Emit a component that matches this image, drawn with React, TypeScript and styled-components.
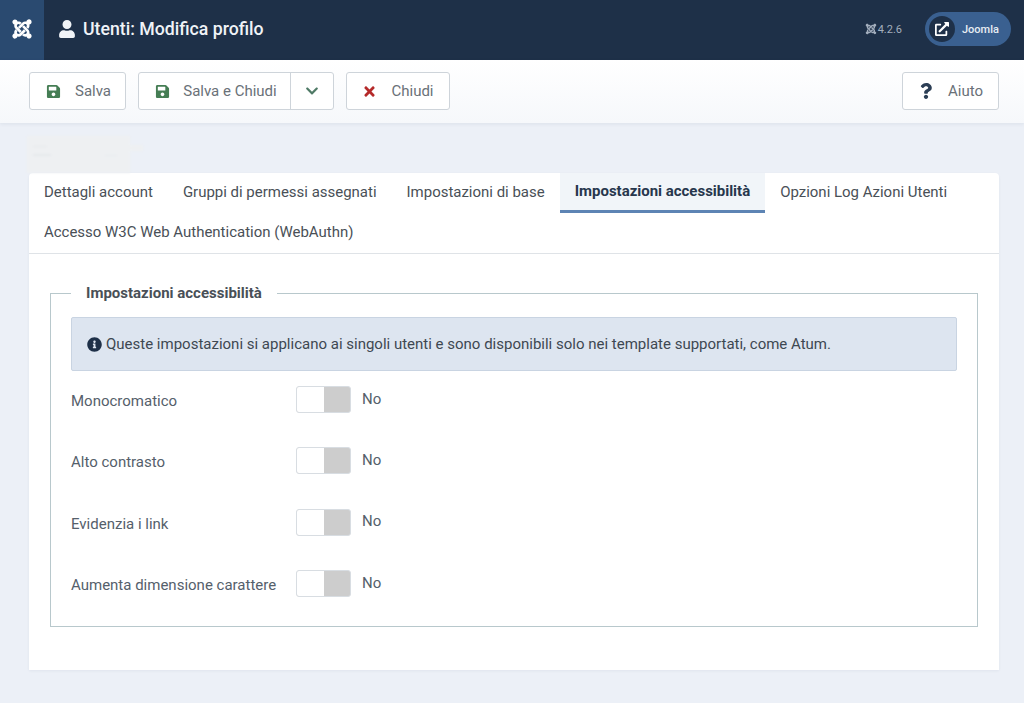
import React from "react";
import styled, { createGlobalStyle } from "styled-components";
import {
  FaChevronDown,
  FaExternalLinkAlt,
  FaInfoCircle,
  FaJoomla,
  FaQuestion,
  FaSave,
  FaTimes,
  FaUser,
} from "react-icons/fa";

const GlobalStyle = createGlobalStyle`
  html, body {
    margin: 0;
    padding: 0;
    height: 100%;
    background: #ecf0f7;
    font-family: Roboto, "Liberation Sans", sans-serif;
    color: #495057;
    -webkit-font-smoothing: antialiased;
  }
  * { box-sizing: border-box; }
`;

const Page = styled.div`
  width: 1024px;
  height: 703px;
  overflow: hidden;
  display: flex;
  flex-direction: column;
`;

const Header = styled.header`
  height: 60px;
  flex: none;
  display: flex;
  align-items: center;
  background: #1e3048;
  color: #fff;
`;

const LogoBox = styled.div`
  width: 44px;
  height: 60px;
  display: flex;
  align-items: center;
  justify-content: center;
  background: #2a4a70;
  font-size: 22px;
  svg { margin: -2px 1px 0 0; }
`;

const PageTitle = styled.h1`
  margin: 0 0 3px 14px;
  display: flex;
  align-items: center;
  gap: 7px;
  font-size: 17.7px;
  font-weight: 500;
  color: #f0f3f7;
  svg { font-size: 18px; }
`;

const HeaderRight = styled.div`
  margin: 0 13px 2px auto;
  display: flex;
  align-items: center;
  gap: 23px;
`;

const Version = styled.span`
  display: flex;
  align-items: center;
  gap: 1px;
  font-size: 11px;
  color: #a3aebd;
  svg { font-size: 12px; }
`;

const SitePill = styled.div`
  width: 86px;
  height: 34px;
  border-radius: 17px;
  display: flex;
  align-items: center;
  background: #3a6090;
  font-size: 11px;
  font-weight: 500;
  color: #e8edf3;
`;

const PillIcon = styled.span`
  width: 26px;
  height: 26px;
  margin: 0 7px 0 4px;
  border-radius: 50%;
  display: flex;
  align-items: center;
  justify-content: center;
  background: #1e3048;
  color: #fff;
  font-size: 14px;
`;

const Toolbar = styled.div`
  height: 63px;
  flex: none;
  padding: 12px 25px 0 29px;
  display: flex;
  align-items: flex-start;
  gap: 12px;
  background: linear-gradient(#fff, #f6f8fb);
  box-shadow: 0 1px 4px rgba(30, 50, 80, 0.08);
`;

const ToolButton = styled.button<{ $width: number; $push?: boolean; $nudge?: number }>`
  width: ${(p) => p.$width}px;
  height: 38px;
  padding: 0 0 0 ${(p) => p.$nudge ?? 0}px;
  display: flex;
  align-items: center;
  justify-content: center;
  gap: 14px;
  margin-left: ${(p) => (p.$push ? "auto" : "0")};
  background: #fff;
  border: 1px solid #ced4da;
  border-radius: 3px;
  font-family: inherit;
  font-size: 15px;
  color: #6a7178;
`;

const SplitGroup = styled.div`
  width: 196px;
  height: 38px;
  display: flex;
  background: #fff;
  border: 1px solid #ced4da;
  border-radius: 3px;
`;

const SplitMain = styled.div`
  flex: 1;
  padding-left: 3px;
  display: flex;
  align-items: center;
  justify-content: center;
  gap: 13px;
  font-size: 15px;
  color: #6a7178;
`;

const SplitCaret = styled.div`
  width: 43px;
  display: flex;
  align-items: center;
  justify-content: center;
  border-left: 1px solid #ced4da;
  color: #4f7a66;
  font-size: 14px;
`;

const SaveIcon = styled(FaSave)`
  color: #457d54;
  font-size: 15px;
`;

const CloseIcon = styled(FaTimes)`
  color: #b52a2a;
  font-size: 15px;
`;

const HelpIcon = styled(FaQuestion)`
  color: #2c3e55;
  font-size: 16px;
`;

const Main = styled.main`
  flex: 1;
  padding: 13px 25px 0 29px;
`;

const Smudge = styled.div`
  position: relative;
  width: 103px;
  height: 37px;
  margin-left: -2px;
  background:
    linear-gradient(#e6e9ec, #e6e9ec) 6px 10px / 14px 1px no-repeat,
    linear-gradient(#e6e9ec, #e6e9ec) 6px 18px / 18px 2px no-repeat,
    linear-gradient(#e8ebee, #e8ebee) 78px 19px / 12px 1px no-repeat,
    #eef0f2;
  filter: blur(1px);
  &::after {
    content: "";
    position: absolute;
    left: 100%;
    top: 9px;
    width: 13px;
    height: 6px;
    background: #eef0f2;
  }
`;

const Card = styled.section`
  height: 497px;
  background: #fff;
  border-radius: 4px 4px 0 0;
  box-shadow: 0 1px 3px rgba(30, 50, 80, 0.06);
`;

const Tabs = styled.nav`
  height: 81px;
  display: flex;
  flex-wrap: wrap;
  align-content: flex-start;
  border-bottom: 1px solid #dfe3e7;
`;

const Tab = styled.div<{ $active?: boolean }>`
  height: 40px;
  padding: 0 15px 2px;
  display: flex;
  align-items: center;
  font-size: 14.98px;
  font-weight: ${(p) => (p.$active ? 700 : 400)};
  color: ${(p) => (p.$active ? "#27374d" : "#495057")};
  background: ${(p) => (p.$active ? "#f1f5f9" : "transparent")};
  border-bottom: ${(p) => (p.$active ? "3px solid #5d84b4" : "0")};
`;

const Body = styled.div`
  padding: 30px 21px 0;
`;

const Fieldset = styled.fieldset`
  width: 928px;
  height: 343px;
  margin: 0;
  padding: 15px 20px 0;
  border: 1px solid #b8c8cc;
`;

const Legend = styled.legend`
  margin-left: 0;
  padding: 0 15px;
  width: auto;
  font-size: 15px;
  font-weight: 700;
  color: #495057;
`;

const Alert = styled.div`
  height: 54px;
  padding: 0 15px;
  display: flex;
  align-items: center;
  gap: 4px;
  background: #dde5f0;
  border: 1px solid #c9d4e2;
  border-radius: 2px;
  font-size: 15px;
  color: #3d4852;
  svg {
    font-size: 15px;
    color: #1e3048;
  }
`;

const Options = styled.div`
  margin-top: 15px;
  display: flex;
  flex-direction: column;
  gap: 34.4px;
`;

const Row = styled.div`
  height: 27px;
  display: flex;
  align-items: center;
`;

const RowLabel = styled.label`
  width: 225px;
  padding-top: 3px;
  font-size: 15px;
  color: #55606b;
`;

const Switch = styled.div`
  width: 55px;
  height: 27px;
  display: flex;
  background: #cdcdcd;
  border: 1px solid #d8dde2;
  border-radius: 3px;
  overflow: hidden;
`;

const Knob = styled.span`
  width: 27px;
  background: #fff;
`;

const SwitchText = styled.span`
  margin-left: 11px;
  margin-top: -2px;
  font-size: 15px;
  color: #55606b;
`;

const tabs = [
  "Dettagli account",
  "Gruppi di permessi assegnati",
  "Impostazioni di base",
  "Impostazioni accessibilità",
  "Opzioni Log Azioni Utenti",
  "Accesso W3C Web Authentication (WebAuthn)",
];

const options = [
  "Monocromatico",
  "Alto contrasto",
  "Evidenzia i link",
  "Aumenta dimensione carattere",
];

const App = () => {
  return (
    <Page>
      <GlobalStyle />
      <Header>
        <LogoBox>
          <FaJoomla />
        </LogoBox>
        <PageTitle>
          <FaUser />
          Utenti: Modifica profilo
        </PageTitle>
        <HeaderRight>
          <Version>
            <FaJoomla />
            4.2.6
          </Version>
          <SitePill>
            <PillIcon>
              <FaExternalLinkAlt />
            </PillIcon>
            Joomla
          </SitePill>
        </HeaderRight>
      </Header>
      <Toolbar>
        <ToolButton $width={97} $nudge={2}>
          <SaveIcon />
          Salva
        </ToolButton>
        <SplitGroup>
          <SplitMain>
            <SaveIcon />
            Salva e Chiudi
          </SplitMain>
          <SplitCaret>
            <FaChevronDown />
          </SplitCaret>
        </SplitGroup>
        <ToolButton $width={104}>
          <CloseIcon />
          Chiudi
        </ToolButton>
        <ToolButton $width={97} $push>
          <HelpIcon />
          Aiuto
        </ToolButton>
      </Toolbar>
      <Main>
        <Smudge />
        <Card>
          <Tabs>
            {tabs.map((t) => (
              <Tab key={t} $active={t === "Impostazioni accessibilità"}>
                {t}
              </Tab>
            ))}
          </Tabs>
          <Body>
            <Fieldset>
              <Legend>Impostazioni accessibilità</Legend>
              <Alert>
                <FaInfoCircle />
                Queste impostazioni si applicano ai singoli utenti e sono disponibili solo nei template supportati, come Atum.
              </Alert>
              <Options>
                {options.map((o) => (
                  <Row key={o}>
                    <RowLabel>{o}</RowLabel>
                    <Switch>
                      <Knob />
                    </Switch>
                    <SwitchText>No</SwitchText>
                  </Row>
                ))}
              </Options>
            </Fieldset>
          </Body>
        </Card>
      </Main>
    </Page>
  );
};

export default App;
